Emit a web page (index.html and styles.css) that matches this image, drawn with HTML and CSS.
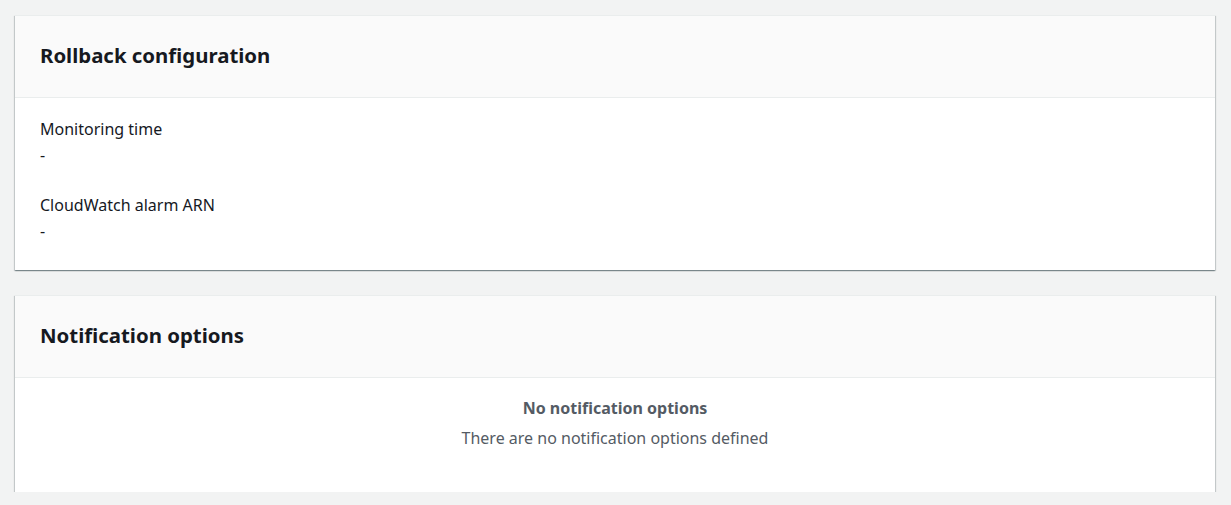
FILE: index.html
```html
<!DOCTYPE html>
<html lang="en">
<head>
<meta charset="utf-8">
<title>Deployment settings</title>
<link rel="stylesheet" href="styles.css">
</head>
<body>
<main class="page">
  <section class="card">
    <header class="card-header">
      <h2 class="card-title">Rollback configuration</h2>
    </header>
    <div class="card-body">
      <div class="kv">
        <div class="kv-label">Monitoring time</div>
        <div class="kv-value">-</div>
      </div>
      <div class="kv">
        <div class="kv-label">CloudWatch alarm ARN</div>
        <div class="kv-value">-</div>
      </div>
    </div>
  </section>
  <section class="card">
    <header class="card-header">
      <h2 class="card-title">Notification options</h2>
    </header>
    <div class="card-body empty">
      <div class="empty-title">No notification options</div>
      <div class="empty-text">There are no notification options defined</div>
    </div>
  </section>
</main>
</body>
</html>
```

FILE: styles.css
```css
html, body {
  margin: 0;
  padding: 0;
  background: #f2f3f3;
}
body {
  font-family: "Noto Sans", "Open Sans", Arial, sans-serif;
  font-size: 16px;
  line-height: 22px;
  color: #16191f;
}
.page {
  display: flex;
  flex-direction: column;
  gap: 25px;
  padding: 15px 16px 0 15px;
}
.card {
  background: #ffffff;
  border-top: 1px solid #eaeded;
  box-shadow: 0 1px 1px 0 rgba(0, 28, 36, 0.3),
              1px 1px 1px 0 rgba(0, 28, 36, 0.15),
              -1px 1px 1px 0 rgba(0, 28, 36, 0.15);
}
.card-header {
  background: #fafafa;
  border-bottom: 1px solid #eaeded;
  padding: 27px 25px 30px;
}
.card-title {
  margin: 0;
  font-size: 20.4px;
  line-height: 24px;
  font-weight: 700;
  color: #16191f;
}
.card-body {
  padding: 20px 25px 28px;
  display: flex;
  flex-direction: column;
  gap: 28px;
}
.kv {
  display: flex;
  flex-direction: column;
  gap: 4px;
}
.kv-label, .kv-value {
  color: #16191f;
}
.card-body.empty {
  align-items: center;
  gap: 8px;
  padding: 19px 25px 43px;
  color: #545b64;
}
.empty-title {
  font-weight: 700;
}
```
